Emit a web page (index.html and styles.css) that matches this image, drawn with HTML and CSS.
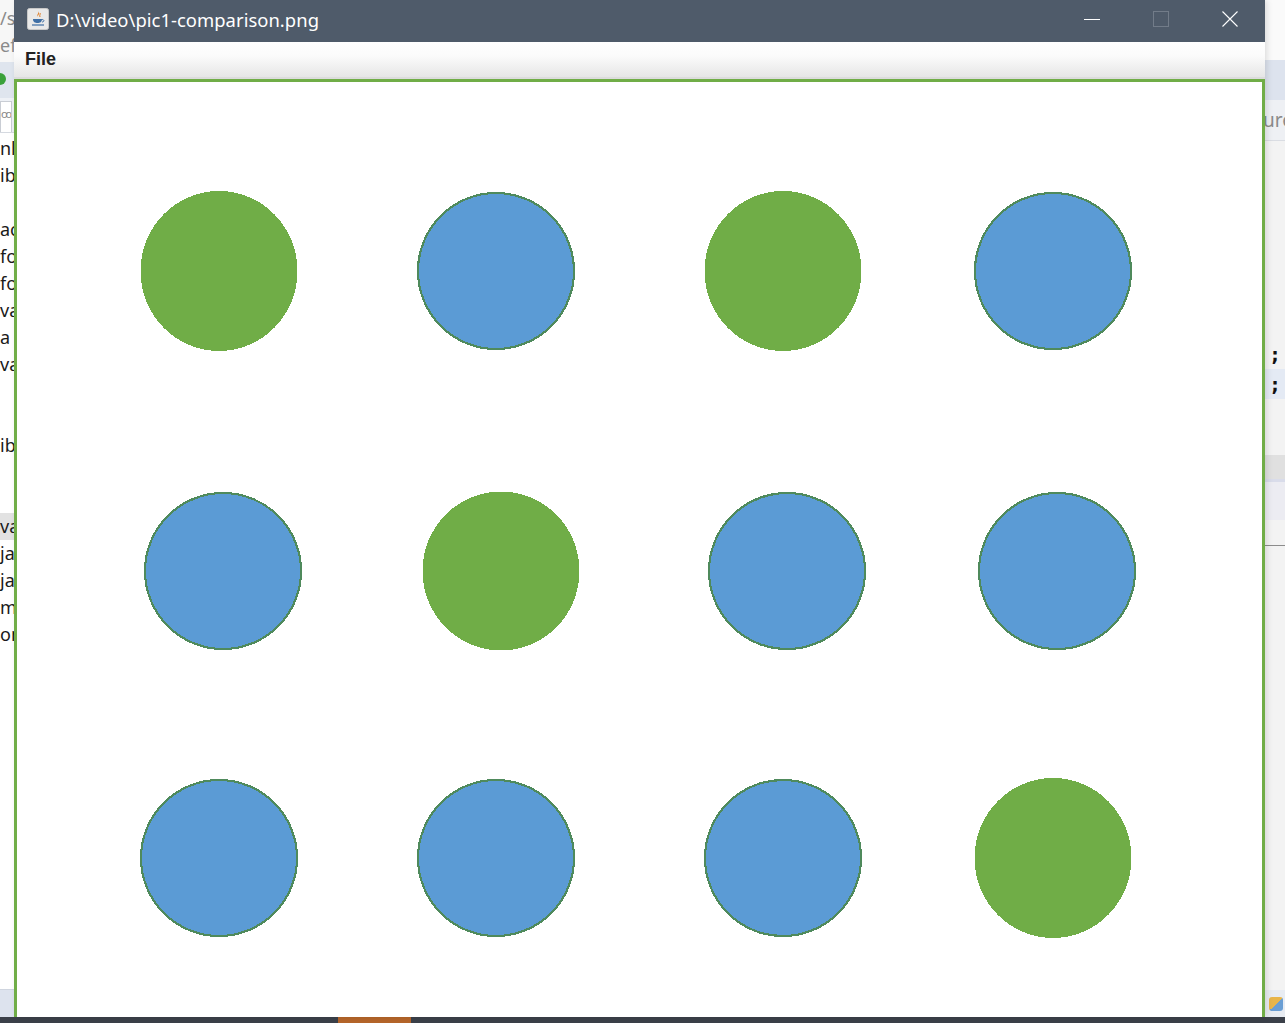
FILE: index.html
```html
<!DOCTYPE html>
<html>
<head>
<meta charset="utf-8">
<link rel="stylesheet" href="styles.css">
</head>
<body>
<div class="screen">
  <div class="bg-left">
    <div class="bl-top">
      <div class="bl-line gray">/s</div>
      <div class="bl-line gray">efa</div>
    </div>
    <div class="bl-toolbar"><span class="run-dot"></span></div>
    <div class="bl-tab"><span class="tab">ꝏ</span></div>
    <div class="bl-code">
      <div class="bl-line">nl</div>
      <div class="bl-line">ib</div>
      <div class="bl-line"></div>
      <div class="bl-line">ac</div>
      <div class="bl-line">fo</div>
      <div class="bl-line">fo</div>
      <div class="bl-line">va</div>
      <div class="bl-line">a</div>
      <div class="bl-line">va</div>
      <div class="bl-line"></div>
      <div class="bl-line"></div>
      <div class="bl-line">ib</div>
      <div class="bl-line"></div>
      <div class="bl-line"></div>
      <div class="bl-line sel">va</div>
      <div class="bl-line">ja</div>
      <div class="bl-line">ja</div>
      <div class="bl-line">m</div>
      <div class="bl-line">on</div>
    </div>
    <div class="bl-bottom"></div>
  </div>

  <div class="window">
    <div class="titlebar">
      <span class="app-icon">
        <svg width="22" height="22" viewBox="0 0 22 22">
          <rect x="0.5" y="0.5" width="21" height="21" rx="2" fill="#e9e9e9" stroke="#c8c8c8"/>
          <path d="M11 3 C13 5 9 6 11 9 C10 7 14 6 11 3 Z" fill="#e07a1f"/>
          <path d="M13 5 C14 6 12 7 13 9" stroke="#e07a1f" stroke-width="1" fill="none"/>
          <path d="M6 11 H15 C15 14 13 15 10.5 15 C8 15 6 14 6 11 Z" fill="#3f6fa5"/>
          <path d="M15 11.5 C17.5 11.5 17.5 14 15 14" stroke="#3f6fa5" stroke-width="1" fill="none"/>
          <path d="M5 17 H17" stroke="#3f6fa5" stroke-width="1.2"/>
        </svg>
      </span>
      <span class="title">D:\video\pic1-comparison.png</span>
      <div class="controls">
        <span class="ctl"><svg width="16" height="16" viewBox="0 0 16 16"><path d="M0 8.5 H16" stroke="#ffffff" stroke-width="1"/></svg></span>
        <span class="ctl"><svg width="16" height="16" viewBox="0 0 16 16"><rect x="0.5" y="0.5" width="15" height="15" fill="none" stroke="#727c89" stroke-width="1"/></svg></span>
        <span class="ctl"><svg width="16" height="16" viewBox="0 0 16 16"><path d="M0.5 0.5 L15.5 15.5 M15.5 0.5 L0.5 15.5" stroke="#ffffff" stroke-width="1.1"/></svg></span>
      </div>
    </div>
    <div class="menubar"><span class="menu-item">File</span></div>
    <div class="menu-sep"></div>
    <div class="canvas">
      <svg class="board" width="1245" height="935" viewBox="0 0 1245 935">
        <g shape-rendering="crispEdges">
          <ellipse cx="202" cy="189" rx="78.5" ry="80" class="g"/>
          <circle cx="479" cy="189" r="78" class="b"/>
          <ellipse cx="766" cy="189" rx="78.5" ry="80" class="g"/>
          <circle cx="1036" cy="189" r="78" class="b"/>

          <circle cx="206" cy="489" r="78" class="b"/>
          <ellipse cx="484" cy="489" rx="78.5" ry="79.5" class="g"/>
          <circle cx="770" cy="489" r="78" class="b"/>
          <circle cx="1040" cy="489" r="78" class="b"/>

          <circle cx="202" cy="776" r="78" class="b"/>
          <circle cx="479" cy="776" r="78" class="b"/>
          <circle cx="766" cy="776" r="78" class="b"/>
          <ellipse cx="1036" cy="776" rx="78.5" ry="80" class="g"/>
        </g>
      </svg>
    </div>
  </div>

  <div class="bg-right">
    <div class="br-top"></div>
    <div class="br-toolbar"></div>
    <div class="br-tab"><span class="ure">ure</span></div>
    <div class="br-code">
      <div class="br-gap1"></div>
      <div class="br-line">;</div>
      <div class="br-line hl">;</div>
      <div class="br-gap2"></div>
      <div class="br-band"></div>
      <div class="br-band2"></div>
      <div class="br-rule"></div>
    </div>
    <div class="br-bottom"><span class="sys-icon"></span></div>
  </div>

  <div class="taskbar">
    <div class="task-space"></div>
    <div class="task-active"></div>
  </div>
</div>
</body>
</html>
```

FILE: styles.css
```css
html, body {
  margin: 0;
  padding: 0;
}
body {
  width: 1285px;
  height: 1023px;
  overflow: hidden;
  background: #ffffff;
  font-family: "Noto Sans", "Open Sans", "Liberation Sans", sans-serif;
}
.screen {
  display: grid;
  grid-template-columns: 14px 1251px 20px;
  grid-template-rows: 1017px 6px;
  width: 1285px;
  height: 1023px;
}

/* ---------- left background strip ---------- */
.bg-left {
  display: flex;
  flex-direction: column;
  overflow: hidden;
  background: #ffffff;
  font-size: 18px;
  color: #1a1a1a;
}
.bl-top {
  height: 62px;
  background: #f7f7f7;
  display: flex;
  flex-direction: column;
  padding-top: 5px;
  box-sizing: border-box;
}
.bl-top .bl-line { height: 27px; }
.bl-line {
  height: 27px;
  line-height: 27px;
  white-space: nowrap;
  padding-left: 0;
}
.bl-line.gray { color: #8a8a8a; }
.bl-toolbar {
  height: 36px;
  background: #dfe5ee;
  display: flex;
  align-items: center;
}
.run-dot {
  width: 12px;
  height: 12px;
  border-radius: 50%;
  background: #3aa13a;
  margin-left: -6px;
  margin-top: -2px;
}
.bl-tab {
  height: 34px;
  background: #eef1f6;
  border-bottom: 1px solid #d5d9e0;
  display: flex;
  align-items: flex-end;
}
.tab {
  display: block;
  width: 10px;
  height: 30px;
  background: #ffffff;
  border: 1px solid #c9cdd4;
  border-bottom: none;
  font-size: 11px;
  color: #888;
  line-height: 24px;
  overflow: hidden;
}
.bl-code {
  flex: 1;
  padding-top: 2px;
}
.bl-line.sel { background: #e2e2e2; }
.bl-bottom {
  height: 27px;
  background: #dde3ee;
  border-top: 1px solid #cfd5df;
}

/* ---------- window ---------- */
.window {
  display: flex;
  flex-direction: column;
  background: #ffffff;
  box-shadow: 2px 0 6px rgba(0,0,0,0.12);
  position: relative;
  z-index: 1;
}
.titlebar {
  height: 42px;
  flex: none;
  background: #4f5b6a;
  display: flex;
  align-items: center;
  color: #ffffff;
}
.app-icon {
  display: flex;
  margin-left: 13px;
  margin-right: 7px;
  margin-top: -4px;
}
.title {
  font-family: "Noto Sans", "Open Sans", sans-serif;
  font-size: 18.4px;
  letter-spacing: 0.05px;
  margin-top: -4px;
}
.controls {
  margin-left: auto;
  display: flex;
  align-items: center;
  margin-top: -4px;
  margin-right: 27px;
  gap: 53px;
}
.ctl { display: flex; }
.menubar {
  height: 35px;
  flex: none;
  background: linear-gradient(#ffffff, #fbfbfb 40%, #e6e6e6);
  display: flex;
  align-items: center;
}
.menu-item {
  font-family: "Liberation Sans", "Arial", sans-serif;
  font-weight: bold;
  font-size: 18px;
  color: #222222;
  margin-left: 11px;
  margin-top: -1px;
}
.menu-sep {
  height: 2px;
  flex: none;
  background: #dcdcdc;
}
.canvas {
  flex: 1;
  border: 3px solid #70ad47;
  border-bottom: none;
  background: #ffffff;
  overflow: hidden;
}
.board { display: block; }
.g { fill: #70ad47; }
.b { fill: #5b9bd5; stroke: #4f8a5c; stroke-width: 2.2; }

/* ---------- right background strip ---------- */
.bg-right {
  display: flex;
  flex-direction: column;
  background: #f4f4f4;
  overflow: hidden;
  font-size: 18px;
}
.br-top { height: 60px; background: #fafafa; }
.br-toolbar { height: 40px; background: #dde3ee; }
.br-tab {
  height: 40px;
  background: #eef0f4;
  border-bottom: 1px solid #dadde3;
  display: flex;
  align-items: center;
}
.ure {
  color: #8a8a8a;
  font-size: 19px;
  margin-left: -2px;
}
.br-code {
  flex: 1;
  display: flex;
  flex-direction: column;
  background: #f3f3f3;
}
.br-gap1 { height: 198px; }
.br-line {
  height: 30px;
  line-height: 30px;
  font-weight: bold;
  font-family: "DejaVu Sans Mono", monospace;
  font-size: 20px;
  color: #111;
  padding-left: 4px;
}
.br-line.hl { background: #e4eaf4; }
.br-gap2 { height: 56px; }
.br-band { height: 24px; background: #e0e0e0; }
.br-band2 {
  height: 38px;
  background: #ececf2;
  border-top: 3px solid #d9dcea;
}
.br-rule {
  margin-top: 25px;
  border-top: 1px solid #8c8c8c;
}
.br-bottom {
  height: 27px;
  background: #e8ecf2;
  display: flex;
  align-items: center;
}
.sys-icon {
  width: 14px;
  height: 14px;
  margin-left: 4px;
  background: linear-gradient(135deg, #e8b54a 50%, #6a9ed4 50%);
  border-radius: 3px;
}

/* ---------- taskbar ---------- */
.taskbar {
  grid-column: 1 / 4;
  display: flex;
  background: #3b4049;
}
.task-space { width: 338px; }
.task-active {
  width: 73px;
  background: #b5652a;
}
```
